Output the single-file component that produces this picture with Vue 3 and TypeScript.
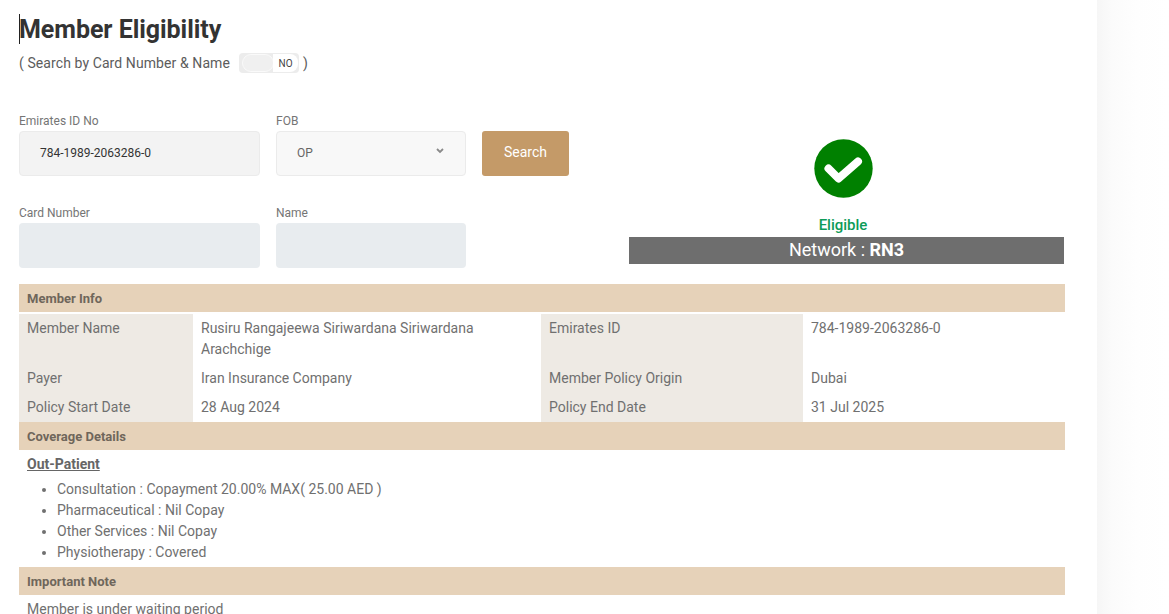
<script setup lang="ts">
interface Row { l1: string; v1: string; l2: string; v2: string }
const rows: Row[] = [
  { l1: 'Member Name', v1: 'Rusiru Rangajeewa Siriwardana Siriwardana Arachchige', l2: 'Emirates ID', v2: '784-1989-2063286-0' },
  { l1: 'Payer', v1: 'Iran Insurance Company', l2: 'Member Policy Origin', v2: 'Dubai' },
  { l1: 'Policy Start Date', v1: '28 Aug 2024', l2: 'Policy End Date', v2: '31 Jul 2025' },
]
const coverage: string[] = [
  'Consultation : Copayment 20.00% MAX( 25.00 AED )',
  'Pharmaceutical : Nil Copay',
  'Other Services : Nil Copay',
  'Physiotherapy : Covered',
]
</script>

<template>
  <div class="page">
    <main class="main">
      <h1 class="title"><span class="caret"></span>Member Eligibility</h1>
      <div class="mode">
        <span>( Search by Card Number &amp; Name</span>
        <span class="toggle"><span class="knob"></span><span class="no">NO</span></span>
        <span>)</span>
      </div>

      <section class="top">
        <div class="forms">
          <div class="form-row">
            <label class="field f1"><span class="lbl">Emirates ID No</span><span class="box id">784-1989-2063286-0</span></label>
            <label class="field f2">
              <span class="lbl">FOB</span>
              <span class="box sel">OP
                <svg class="chev" width="8" height="6" viewBox="0 0 8 6"><path d="M1 1l3 3 3-3" fill="none" stroke="#8a8a8a" stroke-width="1.8"/></svg>
              </span>
            </label>
            <button class="search" type="button">Search</button>
          </div>
          <div class="form-row">
            <label class="field f1"><span class="lbl">Card Number</span><span class="box dis"></span></label>
            <label class="field f2"><span class="lbl">Name</span><span class="box dis"></span></label>
          </div>
        </div>
        <div class="status">
          <svg class="tick" width="59" height="59" viewBox="0 0 59 59">
            <circle cx="29.5" cy="29.5" r="29.2" fill="#008000"/>
            <path d="M14.5 29.5l10 10L44 22.5" fill="none" stroke="#fff" stroke-width="8" stroke-linecap="round" stroke-linejoin="round"/>
          </svg>
          <div class="elig">Eligible</div>
          <div class="network">Network : <b>RN3</b></div>
        </div>
      </section>

      <div class="band">Member Info</div>
      <div class="info">
        <template v-for="r in rows" :key="r.l1">
          <div class="k">{{ r.l1 }}</div>
          <div class="v">{{ r.v1 }}</div>
          <div class="k">{{ r.l2 }}</div>
          <div class="v">{{ r.v2 }}</div>
        </template>
      </div>
      <div class="band">Coverage Details</div>
      <div class="cover">
        <div class="sub">Out-Patient</div>
        <ul class="list">
          <li v-for="c in coverage" :key="c">{{ c }}</li>
        </ul>
      </div>
      <div class="band">Important Note</div>
      <div class="note">Member is under waiting period</div>
    </main>
    <div class="side"></div>
  </div>
</template>

<style>
html, body { margin: 0; background: #fff; overflow: hidden; }
</style>

<style scoped>
.page {
  display: flex;
  width: 1169px;
  height: 614px;
  overflow: hidden;
  font-family: Roboto, "Liberation Sans", sans-serif;
  color: #707070;
  background: #fff;
}
.main {
  width: 1046px;
  flex: none;
  padding: 0 32px 0 19px;
}
.side {
  flex: none;
  width: 72px;
  background: linear-gradient(90deg, #f6f6f6 0, #fbfbfb 15px, #fefefe 40px, #fff 72px);
}
.title {
  position: relative;
  margin: 0;
  padding-top: 15px;
  font-size: 25px;
  line-height: 30px;
  font-weight: 700;
  letter-spacing: -0.05px;
  color: #333;
}
.caret {
  position: absolute;
  left: 0;
  top: 14px;
  width: 1px;
  height: 30px;
  background: #222;
}
.mode {
  display: flex;
  align-items: center;
  height: 20px;
  margin-top: 8px;
  font-size: 14px;
  letter-spacing: 0.09px;
  color: #5c5c5c;
}
.toggle {
  display: flex;
  align-items: center;
  width: 60px;
  height: 20px;
  margin: 0 4px 0 9px;
  padding: 1px;
  box-sizing: border-box;
  border-radius: 4px;
  background: #ececec;
}
.knob {
  width: 30px;
  height: 16px;
  margin-left: 2px;
  border-radius: 9px;
  background: #f0f0f0;
  border: 1px solid #fafafa;
}
.no {
  flex: 1;
  height: 18px;
  margin-left: -1px;
  border-radius: 0 8px 8px 0;
  background: #fff;
  font-size: 10px;
  line-height: 19px;
  letter-spacing: 0;
  text-align: center;
  color: #444;
}
.top {
  display: flex;
  height: 211px;
}
.forms {
  width: 610px;
  flex: none;
  display: flex;
  flex-direction: column;
  gap: 31px;
  padding-top: 42px;
  box-sizing: border-box;
}
.form-row {
  display: flex;
  gap: 16px;
  height: 61px;
}
.field {
  display: flex;
  flex-direction: column;
  height: 61px;
}
.f1 { width: 241px; }
.f2 { width: 190px; }
.lbl {
  height: 16px;
  font-size: 12px;
  line-height: 12px;
  color: #757575;
}
.box {
  position: relative;
  display: block;
  height: 45px;
  box-sizing: border-box;
  border-radius: 4px;
  font-size: 12px;
  line-height: 43px;
  padding-left: 20px;
}
.id {
  background: #f3f3f3;
  border: 1px solid #ebebeb;
  color: #333;
}
.sel {
  background: #f8f8f8;
  border: 1px solid #ebebeb;
  color: #666;
}
.chev {
  position: absolute;
  right: 21px;
  top: 16px;
}
.dis {
  background: #e8ecef;
}
.search {
  width: 87px;
  height: 45px;
  margin-top: 16px;
  border: 0;
  padding: 0 0 2px 0;
  border-radius: 3px;
  background: #c49a68;
  color: #fff;
  font: 400 14px Roboto, sans-serif;
  line-height: 43px;
  text-align: center;
}
.status {
  width: 435px;
  flex: none;
  display: flex;
  flex-direction: column;
  align-items: center;
  padding-top: 66px;
  box-sizing: border-box;
}
.tick {
  flex: none;
  margin-right: 7px;
}
.elig {
  margin-top: 16px;
  margin-right: 7px;
  height: 22px;
  font-size: 15px;
  line-height: 22px;
  font-weight: 500;
  color: #0d9b58;
}
.network {
  align-self: stretch;
  height: 27px;
  margin-top: 1px;
  background: #6e6e6e;
  color: #fff;
  font-size: 18px;
  line-height: 26px;
  text-align: center;
}
.network b { font-weight: 700; }
.band {
  height: 28px;
  padding-left: 8px;
  background: #e6d2b9;
  font-size: 13px;
  line-height: 29px;
  font-weight: 700;
  color: #6f665b;
}
.info {
  display: grid;
  grid-template-columns: 174px 348px 262px 262px;
  margin-top: 2px;
  font-size: 14px;
  line-height: 21px;
}
.k, .v {
  padding: 4px 8px;
}
.k { background: #eeeae4; }
.cover {
  padding: 4px 8px;
  height: 117px;
  box-sizing: border-box;
  font-size: 14px;
  line-height: 21px;
}
.sub {
  font-weight: 700;
  text-decoration: underline;
  color: #666;
}
.list {
  margin: 4px 0 0;
  padding: 0 0 0 30px;
}
.note {
  padding: 4px 8px;
  font-size: 14px;
  line-height: 21px;
}
</style>
